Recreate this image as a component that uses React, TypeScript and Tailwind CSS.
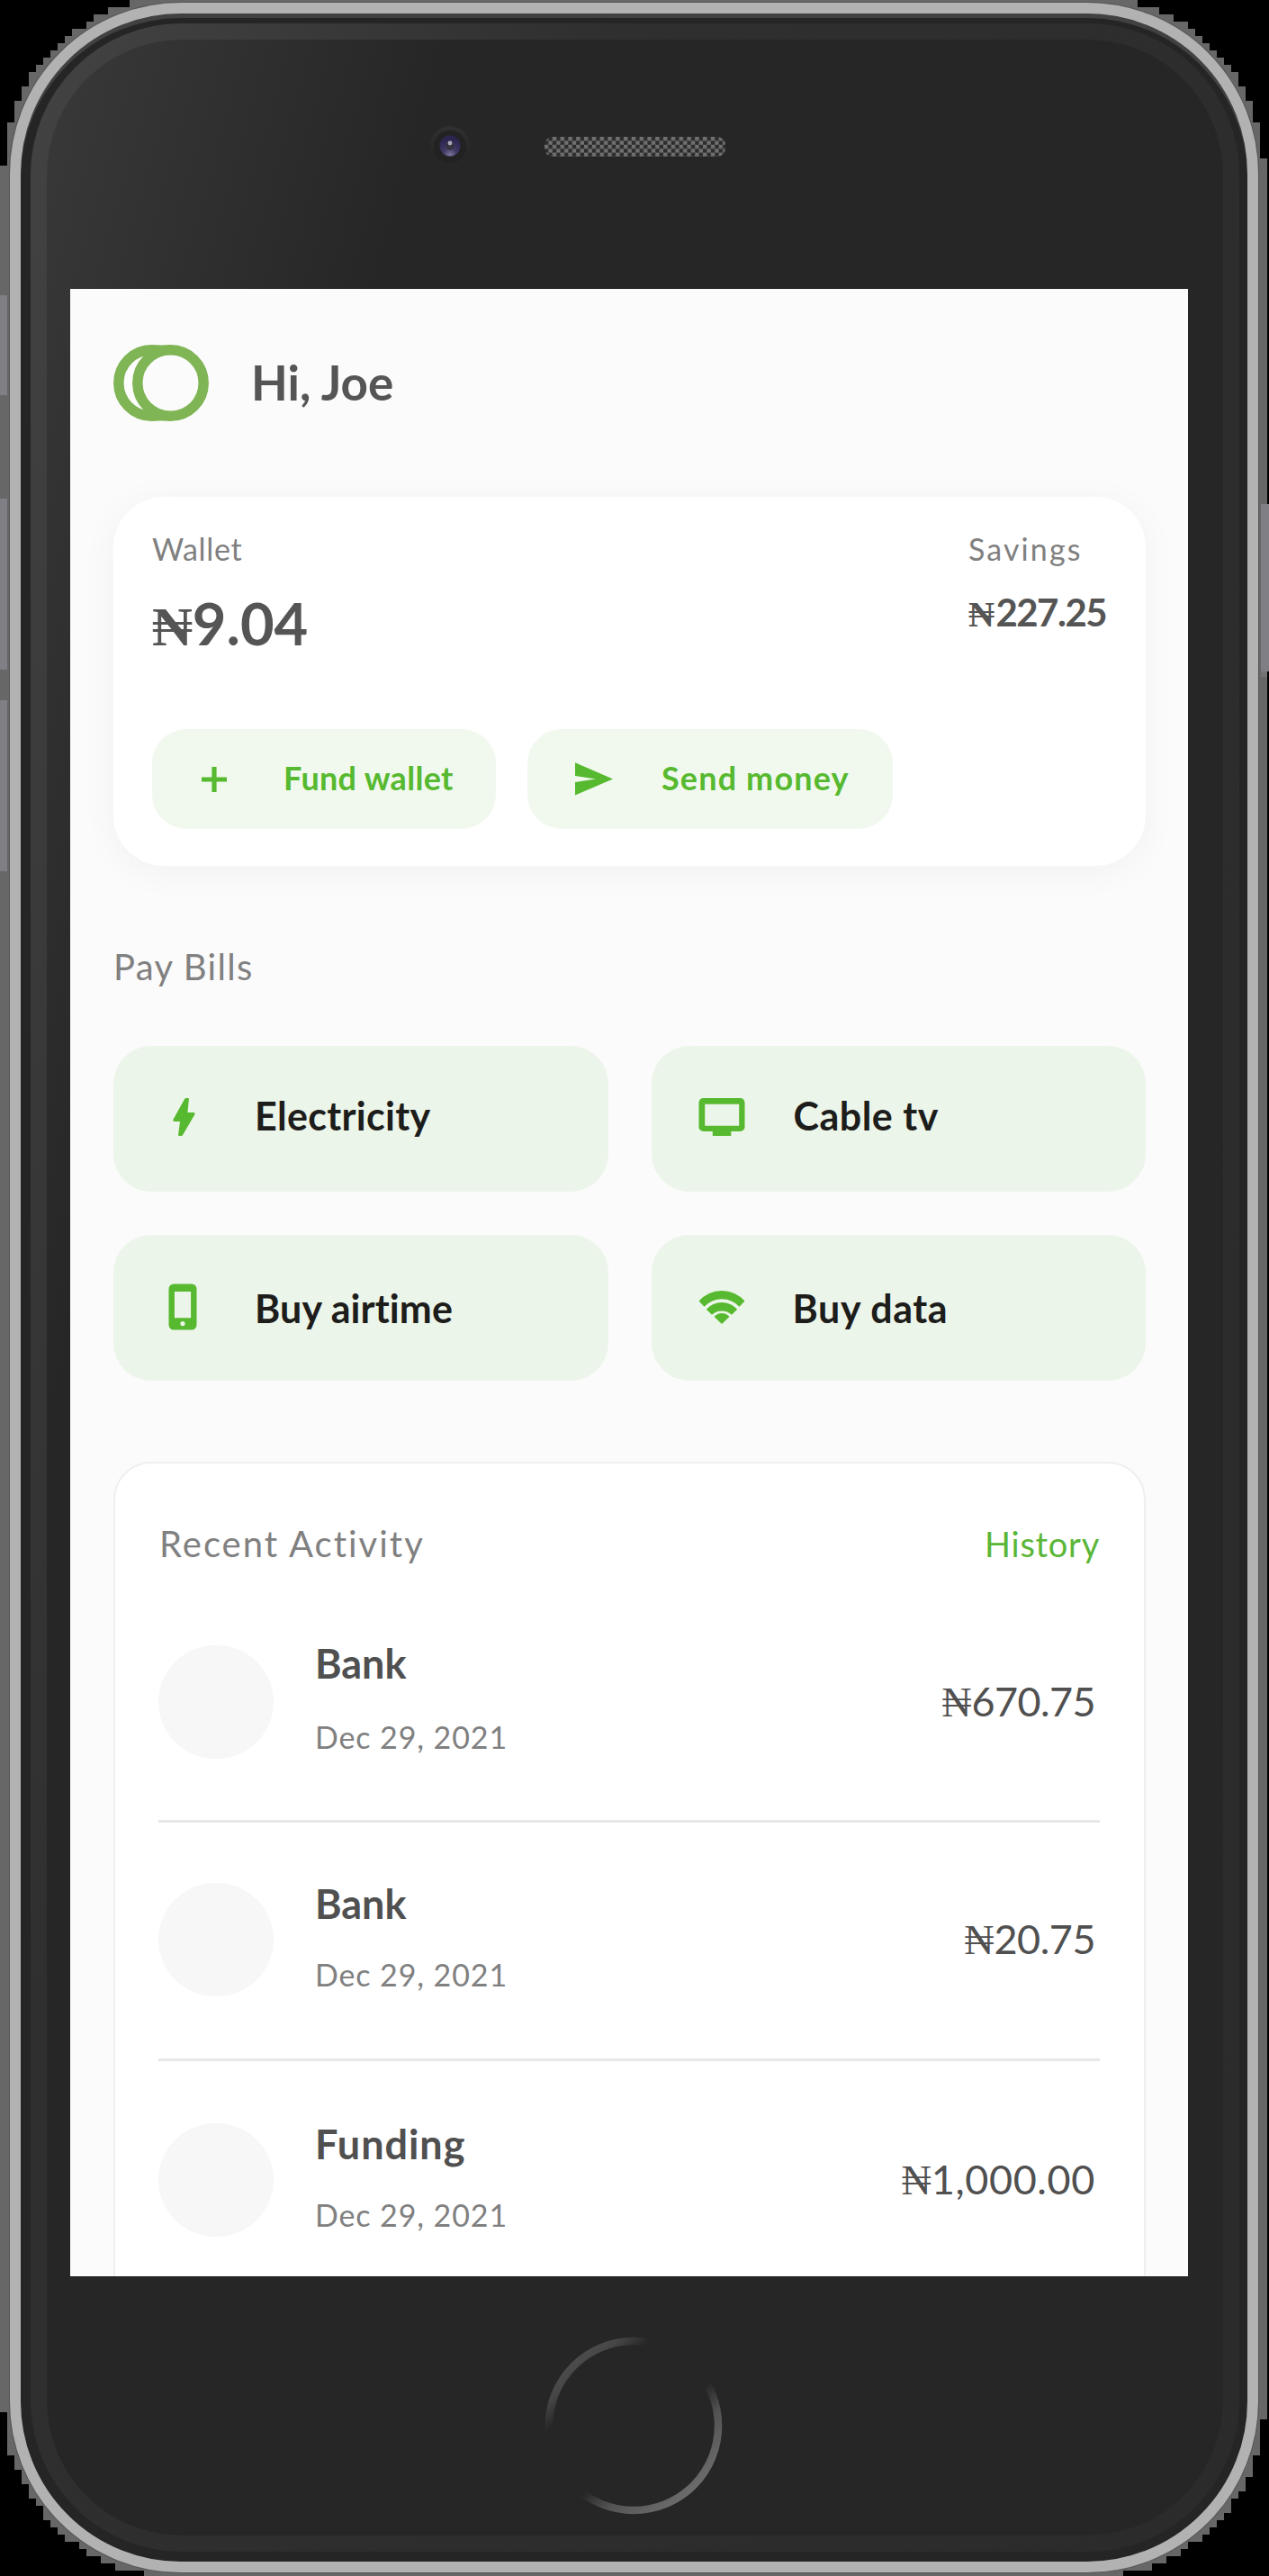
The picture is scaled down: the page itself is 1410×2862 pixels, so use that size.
import React from 'react';

function Naira({ className }: { className: string }) {
  return (
    <span className={`font-['Liberation_Serif',serif] leading-none ${className}`}>₦</span>
  );
}

function Logo() {
  return (
    <svg width="106" height="85" viewBox="0 0 106 85" fill="none" stroke="#80b556" strokeWidth="11.5">
      <path d="M42 3h22M42 82h22" strokeWidth="5" />
      <circle cx="42.5" cy="42.5" r="36.7" fill="#fdfdfd" />
      <circle cx="63.5" cy="42.5" r="36.7" fill="#fbfbfb" />
    </svg>
  );
}

function PlusIcon() {
  return (
    <svg width="48" height="48" viewBox="0 0 48 48">
      <path fill="currentColor" d="M21.4 10h5.2v11.4H38v5.2H26.6V38h-5.2V26.6H10v-5.2h11.4Z" />
    </svg>
  );
}

function SendIcon() {
  return (
    <svg width="48" height="48" viewBox="0 0 48 48">
      <path fill="currentColor" d="M5 5.3L47 23.4L5 41.5V26.9L27.8 23.4L5 19.9Z" />
    </svg>
  );
}

function BoltIcon() {
  return (
    <svg width="56" height="56" viewBox="0 0 56 56">
      <path
        fill="currentColor"
        d="M30.6 7H33.2Q34 7 33.9 8L32.4 23H39Q41.2 23 40.2 25.5L27.4 47.4Q26.6 49 25.2 49H23Q22 49 22.1 48L24 33H18Q15.6 33 16.6 30.5L29 8.2Q29.6 7 30.6 7Z"
      />
    </svg>
  );
}

function PhoneIcon() {
  return (
    <svg width="56" height="56" viewBox="0 0 56 56">
      <path
        fill="currentColor"
        fillRule="evenodd"
        d="M17 2.5h20a5.5 5.5 0 0 1 5.5 5.5v40a5.5 5.5 0 0 1-5.5 5.5H17a5.5 5.5 0 0 1-5.5-5.5v-40a5.5 5.5 0 0 1 5.5-5.5ZM17.9 11v29.3h18.2V11ZM27 44a2.6 2.6 0 1 0 0 5.2 2.6 2.6 0 0 0 0-5.2Z"
      />
    </svg>
  );
}

function TvIcon() {
  return (
    <svg width="56" height="56" viewBox="0 0 56 56">
      <path
        fill="currentColor"
        fillRule="evenodd"
        d="M7.5 7h41a5 5 0 0 1 5 5v27a5 5 0 0 1-5 5H38.3v5H17.8v-5H7.5a5 5 0 0 1-5-5V12a5 5 0 0 1 5-5ZM9.2 13.7v24h38v-24Z"
      />
    </svg>
  );
}

function WifiIcon() {
  return (
    <svg width="56" height="56" viewBox="0 0 56 56" fill="currentColor">
      <path d="M2.5 21.5A34 34 0 0 1 53.5 21.5L47.5 27.8A26.6 26.6 0 0 0 8.5 27.8Z" />
      <path d="M10.8 30.8A23 23 0 0 1 45.2 30.8L39 36.8A16.2 16.2 0 0 0 17 36.8Z" />
      <path d="M19.6 39A11 11 0 0 1 36.4 39L28 47Z" />
    </svg>
  );
}

/* Stepped metal edge and the side buttons behind the phone's body. */
function Silhouette() {
  return (
    <svg className="absolute inset-0" width="1410" height="2862" viewBox="0 0 1410 2862" shapeRendering="crispEdges">
      <path
        fill="#676767"
        d="M144 0V8H120V16H104V24H96V32H80V40H72V48H64V56H56V64H48V72H40V80H32V96H24V112H16V136H8V184H0V2680H8V2728H16V2744H24V2760H32V2776H40V2784H48V2800H56V2808H64V2816H72V2824H88V2832H96V2840H112V2848H128V2856H160V2862H1248V2856H1280V2848H1296V2840H1312V2832H1320V2824H1336V2816H1344V2808H1352V2800H1360V2792H1368V2776H1376V2768H1384V2752H1392V2728H1400V2688H1408V176H1400V136H1392V112H1384V96H1376V80H1368V72H1360V64H1352V56H1344V48H1336V40H1328V32H1320V24H1304V16H1288V8H1264V0Z"
      />
      <g fill="#807f86">
        <rect x="0" y="328" width="8" height="111" />
        <rect x="0" y="554" width="8" height="190" />
        <rect x="0" y="778" width="8" height="190" />
        <rect x="1401" y="560" width="9" height="186" />
      </g>
      <rect x="1401" y="746" width="7" height="6" fill="#747478" />
    </svg>
  );
}

function Camera() {
  return (
    <svg width="56" height="56" viewBox="0 0 56 56">
      <defs>
        <linearGradient id="halo" x1="0" y1="0" x2="0" y2="1">
          <stop offset="0" stopColor="#303030" />
          <stop offset="0.7" stopColor="#262626" />
        </linearGradient>
        <radialGradient id="lens" cx="0.5" cy="0.95" r="0.8">
          <stop offset="0" stopColor="#7f789c" />
          <stop offset="0.4" stopColor="#423b66" />
          <stop offset="1" stopColor="#2c2550" />
        </radialGradient>
      </defs>
      <circle cx="28" cy="28" r="22" fill="url(#halo)" />
      <circle cx="28" cy="29" r="18" fill="#222223" />
      <circle cx="28" cy="28" r="11.5" fill="url(#lens)" />
      <circle cx="28" cy="28" r="4.5" fill="#35333f" />
      <circle cx="28" cy="25" r="2.4" fill="#a9a6b6" />
    </svg>
  );
}

function Speaker() {
  return (
    <svg width="202" height="22" viewBox="0 0 202 22">
      <defs>
        <pattern id="mesh" width="8.8" height="8.8" patternUnits="userSpaceOnUse">
          <rect width="8.8" height="8.8" fill="#2c2c2c" />
          <rect width="4.4" height="4.4" fill="#707070" />
          <rect x="4.4" y="4.4" width="4.4" height="4.4" fill="#707070" />
        </pattern>
      </defs>
      <rect width="201" height="22" rx="9" fill="url(#mesh)" />
    </svg>
  );
}

function HomeButton() {
  return (
    <svg width="198" height="198" viewBox="0 0 198 198">
      <defs>
        <linearGradient id="home" gradientUnits="userSpaceOnUse" x1="34" y1="25" x2="164" y2="173">
          <stop offset="0" stopColor="#4c4c4c" />
          <stop offset="0.08" stopColor="#464646" />
          <stop offset="0.2" stopColor="#262626" />
          <stop offset="0.6" stopColor="#262626" />
          <stop offset="0.75" stopColor="#525252" />
          <stop offset="1" stopColor="#6c6c6c" />
        </linearGradient>
      </defs>
      <circle cx="99" cy="99" r="94" fill="none" stroke="url(#home)" strokeWidth="8.5" />
    </svg>
  );
}

const tiles = [
  { label: 'Electricity', icon: <BoltIcon />, pad: 'pb-[5px]', text: 'tracking-[0.3px]' },
  { label: 'Cable tv', icon: <TvIcon />, pad: 'pb-[5px]', text: 'tracking-[0.5px] pl-[1px]' },
  { label: 'Buy airtime', icon: <PhoneIcon />, pad: 'pb-[3px]', text: 'tracking-[0.1px] pt-[5px]' },
  { label: 'Buy data', icon: <WifiIcon />, pad: 'pb-[3px]', text: 'tracking-[0.6px] pt-[5px]' },
];

const activity = [
  { name: 'Bank', nameClass: '', date: 'Dec 29, 2021', amount: '670.75', amountClass: 'tracking-[-0.6px]', top: 'pt-[61px]', dateTop: 'mt-[35px]', circle: 'mt-[7px]', amt: 'mt-[42px]' },
  { name: 'Bank', nameClass: '', date: 'Dec 29, 2021', amount: '20.75', amountClass: 'tracking-[-0.5px]', top: 'pt-[63px]', dateTop: 'mt-[32px]', circle: 'mt-[4px]', amt: 'mt-[39px]' },
  { name: 'Funding', nameClass: 'tracking-[0.95px]', date: 'Dec 29, 2021', amount: '1,000.00', amountClass: 'tracking-[0.6px]', top: 'pt-[65px]', dateTop: 'mt-[32px]', circle: 'mt-[4px]', amt: 'mt-[39px]' },
];

function WalletCard() {
  return (
    <section className="mt-[84px] flex h-[410px] flex-col justify-between rounded-[56px] bg-white pt-[38px] pr-[41px] pb-[41px] pl-[43px] shadow-[0_6px_40px_rgba(0,0,0,0.045)]">
      <div className="flex justify-between">
        <div>
          <div className="text-[34px] leading-[40px] tracking-[0.7px] text-[#808080]">Wallet</div>
          <div className="mt-[23px] text-[65px] leading-[78px] font-bold text-[#555]">
            <Naira className="text-[62px]" />
            9.04
          </div>
        </div>
        <div className="w-[156px]">
          <div className="text-[34px] leading-[40px] tracking-[2.1px] text-[#808080]">Savings</div>
          <div className="mt-[25px] text-[42px] leading-[50px] font-bold tracking-[-1.5px] text-[#555]">
            <Naira className="text-[40px] tracking-[1.5px]" />
            227.25
          </div>
        </div>
      </div>
      <div className="flex gap-[35px] text-[36px] font-bold text-[#57b92f]">
        <button className="flex h-[111px] w-[382px] items-center gap-[53px] rounded-[38px] bg-[#f1f9ef] pl-[45px]">
          <PlusIcon />
          <span className="pb-[3px] tracking-[0.3px]">Fund wallet</span>
        </button>
        <button className="flex h-[111px] w-[406px] items-center gap-[53px] rounded-[38px] bg-[#f1f9ef] pl-[48px]">
          <SendIcon />
          <span className="pb-[3px] tracking-[1.14px]">Send money</span>
        </button>
      </div>
    </section>
  );
}

function Activity() {
  return (
    <section className="mt-[90px] h-[1000px] rounded-[42px] border-2 border-[#efefef] bg-white pt-[65px] pr-[49px] pl-[48px]">
      <div className="mb-[21px] flex h-[48px] justify-between leading-[48px]">
        <h2 className="pl-px text-[40px] tracking-[2px] text-[#808080]">Recent Activity</h2>
        <a className="text-[38px] tracking-[0.73px] text-[#5ab637]">History</a>
      </div>
      {activity.map((a, i) => (
        <div key={i} className={`flex h-[265px] items-start border-b-3 border-[#e8e8e8] ${a.top}`}>
          <div className={`h-[126px] w-[128px] rounded-full bg-[#f7f7f7] ${a.circle}`} />
          <div className="ml-[46px] flex-1">
            <div className={`text-[45px] leading-[54px] font-bold text-[#505050] ${a.nameClass}`}>{a.name}</div>
            <div className={`text-[34px] leading-[40px] tracking-[0.9px] text-[#808080] ${a.dateTop}`}>{a.date}</div>
          </div>
          <div className={`pr-[5px] text-[45px] leading-[54px] text-[#505050] ${a.amt} ${a.amountClass}`}>
            <Naira className="text-[46px] tracking-normal" />
            {a.amount}
          </div>
        </div>
      ))}
    </section>
  );
}

export default function App() {
  return (
    <div className="relative h-[2862px] w-[1410px] overflow-hidden bg-black pt-[3px] pl-[11px] font-['Lato',sans-serif]">
      <Silhouette />
      <div className="relative h-[2855px] w-[1387px] rounded-[190px] border-12 border-[#b2b2b2] bg-[#252525] pt-[11px] pr-[9px] pl-[11px] shadow-[0_0_0_1px_#555,inset_0_5px_0_#414141]">
        <div className="h-[2809px] rounded-[168px] bg-[linear-gradient(106deg,#434343_0px,#2f2f2f_620px,#2b2b2b_100%)] p-[18px]">
          <div className="flex h-[2773px] flex-col rounded-[150px] bg-[linear-gradient(106deg,#393939_0px,#262626_430px)]">
            <div className="flex h-[277px] items-start pt-[90px] pl-[420px]">
              <Camera />
              <div className="mt-[18px] ml-[77px]">
                <Speaker />
              </div>
            </div>
            <main className="ml-[26px] h-[2208px] w-[1242px] shrink-0 overflow-hidden bg-[#fbfbfb] pt-[62px] pr-[47px] pl-[48px]">
              <header className="flex h-[85px] items-center gap-[47px]">
                <Logo />
                <h1 className="pb-[2px] text-[53px] font-bold text-[#555]">Hi, Joe</h1>
              </header>
              <WalletCard />
              <h2 className="mt-[88px] text-[40px] leading-[48px] tracking-[1.3px] text-[#808080]">Pay Bills</h2>
              <div className="mt-[64px] grid grid-cols-2 gap-[48px]">
                {tiles.map((t) => (
                  <button key={t.label} className={`flex h-[162px] items-center gap-[51px] rounded-[42px] bg-[#ecf5e9] pl-[50px] text-[#57b92f] ${t.pad}`}>
                    {t.icon}
                    <span className={`text-[43px] font-bold text-[#1d1d1b] ${t.text}`}>{t.label}</span>
                  </button>
                ))}
              </div>
              <Activity />
            </main>
            <div className="flex pt-[67px] pl-[553px]">
              <HomeButton />
            </div>
          </div>
        </div>
      </div>
    </div>
  );
}
